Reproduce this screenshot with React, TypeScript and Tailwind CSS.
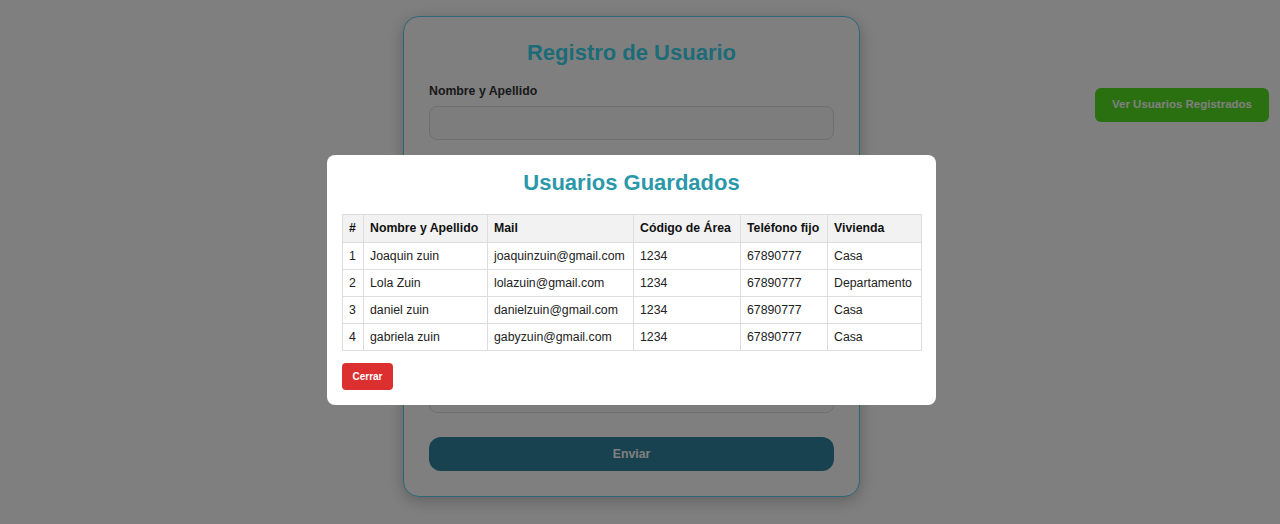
import React from "react";

const users = [
  { n: 1, name: "Joaquin zuin", mail: "joaquinzuin@gmail.com", area: "1234", tel: "67890777", viv: "Casa" },
  { n: 2, name: "Lola Zuin", mail: "lolazuin@gmail.com", area: "1234", tel: "67890777", viv: "Departamento" },
  { n: 3, name: "daniel zuin", mail: "danielzuin@gmail.com", area: "1234", tel: "67890777", viv: "Casa" },
  { n: 4, name: "gabriela zuin", mail: "gabyzuin@gmail.com", area: "1234", tel: "67890777", viv: "Casa" },
];

const fields = [
  { label: "Nombre y Apellido", cls: "mb-[15px]" },
  { label: "Mail", cls: "mb-[11px]" },
  { label: "Código de Área", cls: "mb-[11px]" },
  { label: "Teléfono fijo", cls: "mb-[12px]" },
  { label: "Vivienda", cls: "mb-0" },
];

const th = "border border-[#ddd] px-[6px] py-[6px] font-bold whitespace-nowrap leading-[15px]";
const td = "border border-[#ddd] px-[6px] py-[6px] whitespace-nowrap leading-[14px]";

export default function App() {
  return (
    <div className="relative min-h-[524px] bg-white font-['Liberation_Sans',Arial,sans-serif] text-[#222]">
      <div className="flex justify-center pt-4 pr-[17px]">
        <div className="w-[457px] rounded-[16px] border border-[#54d0f0] bg-white px-[25px] pt-[24px] pb-[25px] shadow-[0_4px_16px_rgba(0,0,0,0.25)]">
          <h2 className="mb-[19px] text-center text-[22px] leading-[24px] font-bold text-[#3cd6f0]">Registro de Usuario</h2>
          {fields.map((f) => (
            <div key={f.label} className={f.cls}>
              <label className="mb-[7px] block text-[12.3px] leading-[15px] font-bold text-[#333]">{f.label}</label>
              <div className="h-[34px] rounded-lg border border-[#dcdcdc] bg-[#fafafa]" />
            </div>
          ))}
          <button className="mt-[24px] h-[34px] w-full rounded-[12px] bg-[#30849e] text-[12.3px] font-bold text-white">Enviar</button>
        </div>
      </div>

      <button className="absolute top-[88px] right-[11px] h-[34px] w-[174px] rounded-[6px] bg-[#54e020] text-[11.5px] font-bold text-white">
        Ver Usuarios Registrados
      </button>

      <div className="fixed inset-0 flex justify-center bg-black/50 pt-[155px] pr-[17px]">
        <div className="h-fit w-[609px] rounded-[8px] bg-white p-[15px]">
          <h2 className="mb-[18px] text-center text-[22px] leading-[26px] font-bold text-[#2b98aa]">Usuarios Guardados</h2>
          <table className="w-[579px] table-fixed border-collapse text-[12.3px]">
            <thead>
              <tr className="bg-[#f2f2f2] text-left text-[#111]">
                <th className={`w-[21px] ${th}`}>#</th>
                <th className={`w-[124px] ${th}`}>Nombre y Apellido</th>
                <th className={`w-[146px] ${th}`}>Mail</th>
                <th className={`w-[107px] ${th}`}>Código de Área</th>
                <th className={`w-[87px] ${th}`}>Teléfono fijo</th>
                <th className={`w-[94px] ${th}`}>Vivienda</th>
              </tr>
            </thead>
            <tbody>
              {users.map((u) => (
                <tr key={u.n}>
                  <td className={td}>{u.n}</td>
                  <td className={td}>{u.name}</td>
                  <td className={td}>{u.mail}</td>
                  <td className={td}>{u.area}</td>
                  <td className={td}>{u.tel}</td>
                  <td className={td}>{u.viv}</td>
                </tr>
              ))}
            </tbody>
          </table>
          <button className="mt-[12px] h-[27px] w-[51px] rounded-[4px] bg-[#dc3030] text-[10px] font-bold text-white">Cerrar</button>
        </div>
      </div>
    </div>
  );
}
